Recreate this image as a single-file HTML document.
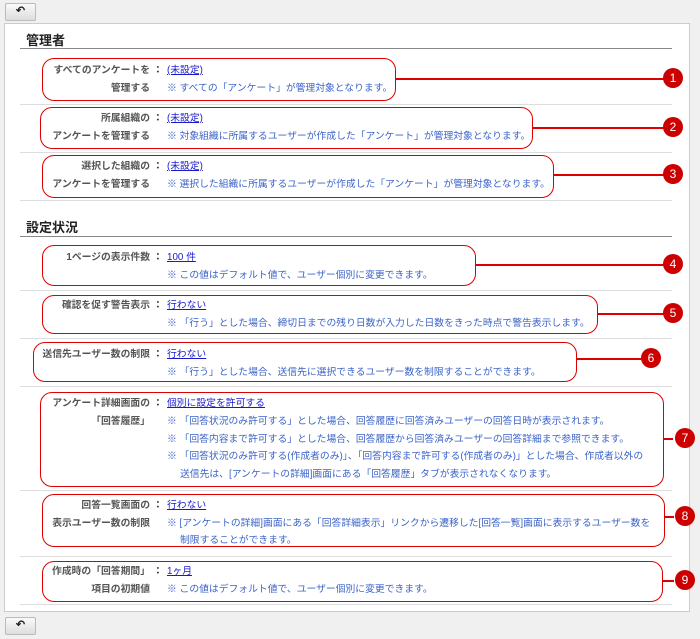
<!DOCTYPE html><html><head><meta charset="utf-8"><style>
body{margin:0;width:700px;height:639px;background:#f0f0f0;position:relative;font-family:"Liberation Sans","Noto Sans CJK JP",sans-serif;font-size:9.8px;color:#333;overflow:hidden}
.btn{position:absolute;left:5px;width:29px;height:16px;border:1px solid #bbb;border-radius:2px;background:linear-gradient(#fafafa,#ddd);font-size:11px;text-align:center;line-height:15px;font-weight:bold;color:#222}
.panel{position:absolute;left:4px;top:23px;width:684px;height:587px;background:#fff;border:1px solid #ccc}
h2{position:absolute;left:26px;margin:0;font-size:13px;font-weight:bold;color:#222}
.hl{position:absolute;left:20px;width:652px;height:1px;background:#888}
.sep{position:absolute;left:20px;width:652px;height:1px;background:#ddd}
.box{position:absolute;border:1.5px solid #d00;border-radius:12px;box-sizing:border-box}
.ln{position:absolute;height:1.5px;background:#d00}
.bd{position:absolute;width:20px;height:20px;border-radius:50%;background:#c00;color:#fff;font-size:12px;text-align:center;line-height:20px}
.t{position:absolute;white-space:nowrap;line-height:12px}
.lb{text-align:right;width:150px;left:0;font-weight:bold;color:#555}
.c{left:153px;font-weight:bold}
.v{left:167px;color:#1a1acc;text-decoration:underline}
.n{color:#3c64c8}
</style></head><body>
<div class="btn" style="top:3px">↶</div>
<div class="panel"></div>
<h2 style="top:30px">管理者</h2><div class="hl" style="top:48px"></div>
<h2 style="top:217px">設定状況</h2><div class="hl" style="top:236px"></div>
<div class="sep" style="top:104px"></div><div class="sep" style="top:152px"></div><div class="sep" style="top:200px"></div>
<div class="sep" style="top:290px"></div><div class="sep" style="top:338px"></div><div class="sep" style="top:386px"></div>
<div class="sep" style="top:490px"></div><div class="sep" style="top:556px"></div><div class="sep" style="top:604px"></div>

<div class="box" style="left:42px;top:58px;width:354px;height:43px"></div><div class="ln" style="left:395px;top:78px;width:272px"></div><div class="bd" style="left:663px;top:68px">1</div>
<div class="t lb" style="top:65px">すべてのアンケートを</div><div class="t c" style="top:65px">：</div><div class="t v" style="top:65px">(未設定)</div>
<div class="t lb" style="top:83px">管理する</div><div class="t n" style="left:167px;top:83px">※ すべての「アンケート」が管理対象となります。</div>

<div class="box" style="left:40px;top:107px;width:493px;height:42px"></div><div class="ln" style="left:532px;top:127px;width:135px"></div><div class="bd" style="left:663px;top:117px">2</div>
<div class="t lb" style="top:113px">所属組織の</div><div class="t c" style="top:113px">：</div><div class="t v" style="top:113px">(未設定)</div>
<div class="t lb" style="top:131px">アンケートを管理する</div><div class="t n" style="left:167px;top:131px">※ 対象組織に所属するユーザーが作成した「アンケート」が管理対象となります。</div>

<div class="box" style="left:42px;top:155px;width:512px;height:43px"></div><div class="ln" style="left:553px;top:174px;width:114px"></div><div class="bd" style="left:663px;top:164px">3</div>
<div class="t lb" style="top:161px">選択した組織の</div><div class="t c" style="top:161px">：</div><div class="t v" style="top:161px">(未設定)</div>
<div class="t lb" style="top:179px">アンケートを管理する</div><div class="t n" style="left:167px;top:179px">※ 選択した組織に所属するユーザーが作成した「アンケート」が管理対象となります。</div>

<div class="box" style="left:42px;top:245px;width:434px;height:41px"></div><div class="ln" style="left:475px;top:264px;width:192px"></div><div class="bd" style="left:663px;top:254px">4</div>
<div class="t lb" style="top:252px">1ページの表示件数</div><div class="t c" style="top:252px">：</div><div class="t v" style="top:252px">100 件</div>
<div class="t n" style="left:167px;top:270px">※ この値はデフォルト値で、ユーザー個別に変更できます。</div>

<div class="box" style="left:42px;top:295px;width:556px;height:39px"></div><div class="ln" style="left:597px;top:313px;width:70px"></div><div class="bd" style="left:663px;top:303px">5</div>
<div class="t lb" style="top:300px">確認を促す警告表示</div><div class="t c" style="top:300px">：</div><div class="t v" style="top:300px">行わない</div>
<div class="t n" style="left:167px;top:318px">※ 「行う」とした場合、締切日までの残り日数が入力した日数をきった時点で警告表示します。</div>

<div class="box" style="left:33px;top:342px;width:544px;height:40px"></div><div class="ln" style="left:576px;top:358px;width:70px"></div><div class="bd" style="left:641px;top:348px">6</div>
<div class="t lb" style="top:349px">送信先ユーザー数の制限</div><div class="t c" style="top:349px">：</div><div class="t v" style="top:349px">行わない</div>
<div class="t n" style="left:167px;top:367px">※ 「行う」とした場合、送信先に選択できるユーザー数を制限することができます。</div>

<div class="box" style="left:40px;top:392px;width:624px;height:95px"></div><div class="ln" style="left:663px;top:438px;width:10px"></div><div class="bd" style="left:675px;top:428px">7</div>
<div class="t lb" style="top:398px">アンケート詳細画面の</div><div class="t c" style="top:398px">：</div><div class="t v" style="top:398px">個別に設定を許可する</div>
<div class="t lb" style="top:416px">「回答履歴」</div>
<div class="t n" style="left:167px;top:416px">※ 「回答状況のみ許可する」とした場合、回答履歴に回答済みユーザーの回答日時が表示されます。</div>
<div class="t n" style="left:167px;top:434px">※ 「回答内容まで許可する」とした場合、回答履歴から回答済みユーザーの回答詳細まで参照できます。</div>
<div class="t n" style="left:167px;top:451px">※ 「回答状況のみ許可する(作成者のみ)」、「回答内容まで許可する(作成者のみ)」とした場合、作成者以外の</div>
<div class="t n" style="left:180px;top:469px">送信先は、[アンケートの詳細]画面にある「回答履歴」タブが表示されなくなります。</div>

<div class="box" style="left:42px;top:494px;width:623px;height:53px"></div><div class="ln" style="left:664px;top:516px;width:10px"></div><div class="bd" style="left:675px;top:506px">8</div>
<div class="t lb" style="top:500px">回答一覧画面の</div><div class="t c" style="top:500px">：</div><div class="t v" style="top:500px">行わない</div>
<div class="t lb" style="top:518px">表示ユーザー数の制限</div>
<div class="t n" style="left:167px;top:518px">※ [アンケートの詳細]画面にある「回答詳細表示」リンクから遷移した[回答一覧]画面に表示するユーザー数を</div>
<div class="t n" style="left:180px;top:535px">制限することができます。</div>

<div class="box" style="left:42px;top:561px;width:621px;height:41px"></div><div class="ln" style="left:662px;top:580px;width:12px"></div><div class="bd" style="left:675px;top:570px">9</div>
<div class="t lb" style="top:566px">作成時の「回答期間」</div><div class="t c" style="top:566px">：</div><div class="t v" style="top:566px">1ヶ月</div>
<div class="t lb" style="top:584px">項目の初期値</div><div class="t n" style="left:167px;top:584px">※ この値はデフォルト値で、ユーザー個別に変更できます。</div>

<div class="btn" style="top:617px">↶</div>
</body></html>
